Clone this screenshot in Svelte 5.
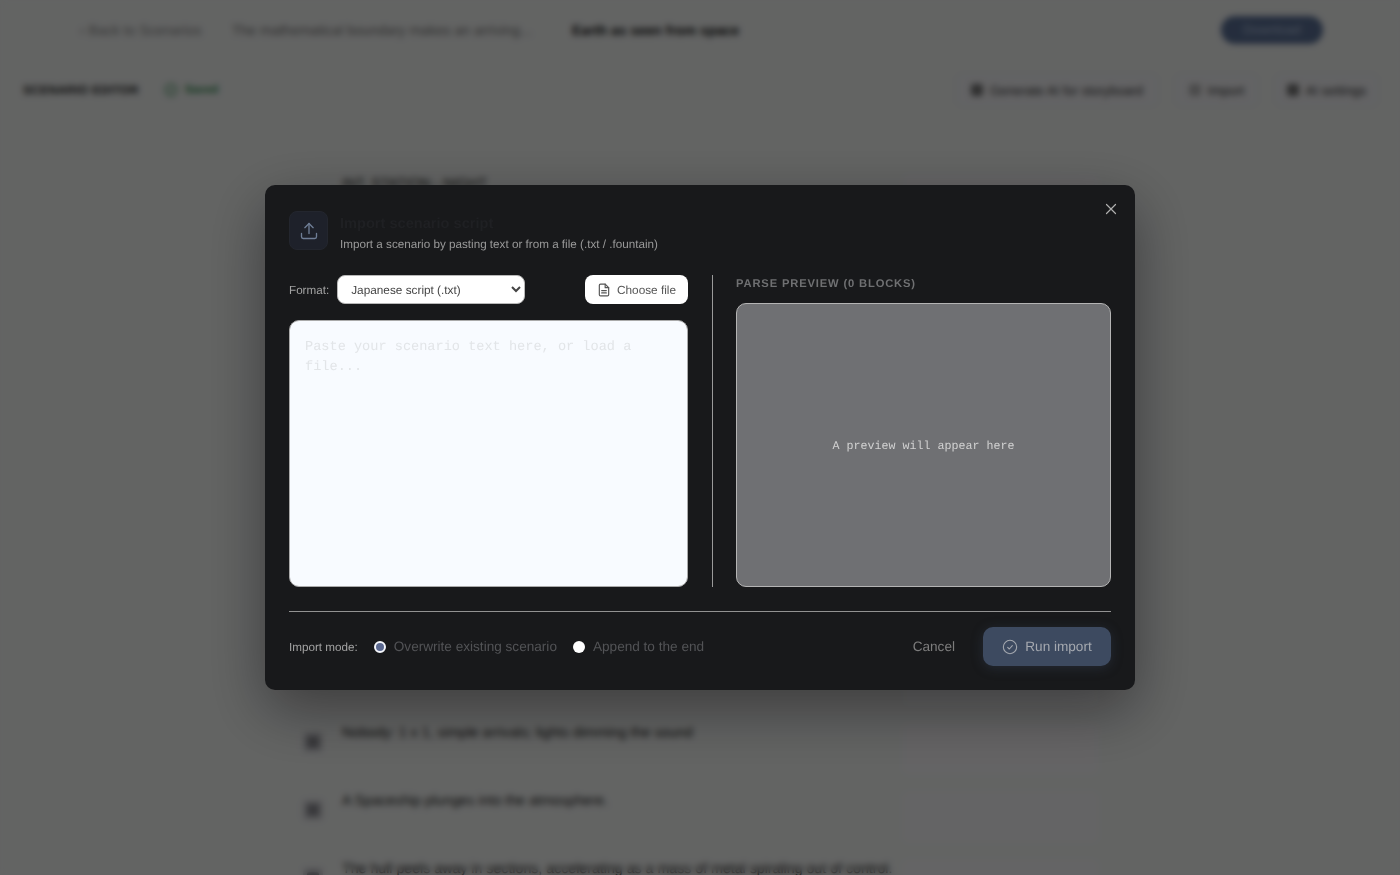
<script>
  const rows = [
    { text: 'INT. STATION - NIGHT', tall: true, icon: false },
    { text: 'A long silence settles over the crew.', icon: true },
    { text: 'Alarms echo along the empty hall.', icon: true },
    { text: 'The commander studies the display.', icon: true },
    { text: 'Static crackles through the speakers.', icon: true },
    { text: 'A warning light begins to flash.', icon: true },
    { text: 'The hatch slides slowly open.', icon: true },
    { text: 'Nobody moves for a long moment.', icon: true },
    { text: 'Nobody: 1 x 1, simple arrivals; lights dimming the sound', icon: true },
    { text: 'A Spaceship plunges into the atmosphere.', icon: true },
    { text: 'The hull peels away in sections, accelerating as a mass of metal spiraling out of control.', icon: true }
  ];
  let mode = $state('overwrite');
  let format = $state('ja');
</script>

<div class="page">
  <header class="top">
    <span class="back">‹ Back to Scenarios</span>
    <span class="crumb">The mathematical boundary makes an arriving...</span>
    <strong class="scene">Earth as seen from space</strong>
    <span class="publish">Download</span>
  </header>
  <div class="tools">
    <div class="tools-left">
      <b>SCENARIO EDITOR</b>
      <span class="saved">
        <svg width="14" height="14" viewBox="0 0 24 24" fill="none" stroke="currentColor" stroke-width="2"><circle cx="12" cy="12" r="10"/><path d="m8 12 3 3 5-6"/></svg>
        Saved
      </span>
    </div>
    <div class="tools-right">
      <span class="tool t1"><i class="glyph"></i>Generate AI for storyboard</span>
      <span class="tool t2"><i class="glyph faint"></i>Import</span>
      <span class="tool t3"><i class="glyph"></i>AI settings</span>
    </div>
  </div>
  <main class="list">
    {#each rows as r}
      <div class="row" class:tall={r.tall}>
        <i class="badge" class:hidden={!r.icon}></i>
        <p>{r.text}</p>
        <span class="meta"></span>
      </div>
    {/each}
  </main>
</div>

<div class="overlay">
  <section class="modal">
    <button class="close" aria-label="Close">
      <svg width="14" height="14" viewBox="0 0 14 14" fill="none" stroke="currentColor" stroke-width="1.2" stroke-linecap="round"><path d="M2.5 2.5l9 9M11.5 2.5l-9 9"/></svg>
    </button>
    <div class="head">
      <div class="upload">
        <svg width="20" height="20" viewBox="0 0 24 24" fill="none" stroke="currentColor" stroke-width="1.6" stroke-linecap="round" stroke-linejoin="round"><path d="M3 15v4a2 2 0 0 0 2 2h14a2 2 0 0 0 2-2v-4"/><path d="M12 15V3"/><path d="m7 8 5-5 5 5"/></svg>
      </div>
      <div class="titles">
        <h2>Import scenario script</h2>
        <p>Import a scenario by pasting text or from a file (.txt / .fountain)</p>
      </div>
    </div>

    <div class="body">
      <div class="left">
        <div class="controls">
          <label class="fmt" for="fmt">Format:</label>
          <select id="fmt" bind:value={format}>
            <option value="ja">Japanese script (.txt)</option>
            <option value="fo">Fountain (.fountain)</option>
          </select>
          <button class="file">
            <svg width="14" height="14" viewBox="0 0 24 24" fill="none" stroke="currentColor" stroke-width="2" stroke-linecap="round" stroke-linejoin="round"><path d="M14 2H6a2 2 0 0 0-2 2v16a2 2 0 0 0 2 2h12a2 2 0 0 0 2-2V8z"/><path d="M14 2v6h6"/><path d="M8 13h8M8 17h8"/></svg>
            Choose file
          </button>
        </div>
        <textarea placeholder="Paste your scenario text here, or load a file..."></textarea>
      </div>
      <div class="vline"></div>
      <div class="right">
        <h3>PARSE PREVIEW (0 BLOCKS)</h3>
        <div class="preview">A preview will appear here</div>
      </div>
    </div>

    <div class="foot">
      <span class="mode">Import mode:</span>
      <label class="radio"><input type="radio" name="m" value="overwrite" bind:group={mode} />Overwrite existing scenario</label>
      <label class="radio"><input type="radio" name="m" value="append" bind:group={mode} />Append to the end</label>
      <button class="cancel">Cancel</button>
      <button class="run">
        <svg width="16" height="16" viewBox="0 0 24 24" fill="none" stroke="currentColor" stroke-width="1.6" stroke-linecap="round" stroke-linejoin="round"><circle cx="12" cy="12" r="10"/><path d="m8.5 12.5 2.5 2.5 4.5-5"/></svg>
        Run import
      </button>
    </div>
  </section>
</div>

<style>
  :global(body) {
    margin: 0;
    background: #fff;
    font-family: "Liberation Sans", Arial, sans-serif;
    text-rendering: geometricPrecision;
  }
  select, button, textarea { text-rendering: geometricPrecision; }
  .page {
    height: 875px;
    overflow: hidden;
    background: #f7f9f8;
    color: #111;
  }
  .top {
    height: 60px;
    display: flex;
    align-items: center;
    padding: 0 77px 0 80px;
    font-size: 14px;
    color: #888;
  }
  .back { width: 152px; white-space: nowrap; }
  .crumb { width: 340px; color: #777; white-space: nowrap; }
  .scene { color: #111; font-size: 13.8px; white-space: nowrap; }
  .publish {
    margin-left: auto;
    width: 102px;
    height: 28px;
    line-height: 28px;
    border-radius: 14px;
    background: #5c7299;
    color: #b9c8e0;
    text-align: center;
    font-size: 13px;
  }
  .tools {
    height: 60px;
    display: flex;
    align-items: center;
    justify-content: space-between;
    padding: 0 22px 0 23px;
  }
  .tools-left { display: flex; align-items: center; gap: 25px; }
  .tools-left b { font-size: 12.1px; letter-spacing: .2px; color: #222; white-space: nowrap; }
  .saved { display: flex; align-items: center; gap: 7px; font-size: 11.4px; color: #2c8a4a; font-weight: 600; }
  .tools-right { display: flex; gap: 17px; }
  .tool {
    display: flex;
    align-items: center;
    justify-content: center;
    gap: 7px;
    box-sizing: border-box;
    height: 32px;
    border: 1px solid #eef0f4;
    border-radius: 6px;
    background: #f7f7fa;
    font-size: 13px;
    color: #333;
    white-space: nowrap;
  }
  .t1 { width: 202px; }
  .t2 { width: 83px; }
  .t3 { width: 103px; }
  .glyph { width: 12px; height: 12px; border-radius: 2px; background: #777; }
  .glyph.faint { background: #bbb; }
  .list { width: 820px; margin: 0 auto; padding-top: 55px; }
  .row {
    height: 68px;
    display: flex;
    align-items: flex-start;
    padding-left: 13px;
    box-sizing: border-box;
  }
  .row.tall { height: 73px; margin-top: 0; }
  .badge {
    flex: none;
    position: relative;
    width: 20px;
    height: 20px;
    margin: 8px 19px 0 0;
    border-radius: 4px;
    background: #d4d4d9;
  }
  .badge::after {
    content: "";
    position: absolute;
    inset: 4px;
    border-radius: 2px;
    background: #8c8c92;
  }
  .badge.hidden { visibility: hidden; }
  .row p {
    margin: 0;
    width: 552px;
    flex: none;
    font-size: 14.2px;
    line-height: 18px;
    color: #222;
    white-space: nowrap;
  }
  .meta {
    margin: 0 0 0 9px;
    width: 195px;
    height: 50px;
    border-radius: 6px;
    background: #fbfafd;
  }

  .overlay {
    position: fixed;
    inset: 0;
    display: flex;
    align-items: center;
    justify-content: center;
    background: rgba(0, 0, 0, .6);
    backdrop-filter: blur(3px);
  }
  .modal {
    position: relative;
    box-sizing: border-box;
    width: 870px;
    height: 505px;
    padding: 26px 24px 24px;
    background: #18191b;
    border-radius: 10px;
    box-shadow: 0 20px 60px rgba(0, 0, 0, .4);
    display: flex;
    flex-direction: column;
  }
  .close {
    position: absolute;
    top: 17px;
    right: 17px;
    width: 14px;
    height: 14px;
    padding: 0;
    display: flex;
    border: 0;
    background: none;
    color: #b0b0b0;
  }
  .head { display: flex; gap: 12px; height: 40px; }
  .upload {
    width: 39px;
    height: 39px;
    box-sizing: border-box;
    display: flex;
    align-items: center;
    justify-content: center;
    border-radius: 8px;
    background: #1e212a;
    border: 1px solid #23262e;
    color: #6f7e96;
  }
  .titles h2 {
    margin: 4px 0 0;
    font-size: 14.6px;
    line-height: 18px;
    font-weight: 600;
    color: #1f2023;
  }
  .titles p {
    margin: 4px 0 0;
    font-size: 11.68px;
    line-height: 15px;
    color: #9a9a9a;
    white-space: nowrap;
  }
  .body {
    margin-top: 24px;
    flex: none;
    height: 312px;
    display: grid;
    grid-template-columns: 399px 0 1fr;
    gap: 24px;
  }
  .left { display: flex; flex-direction: column; gap: 16px; }
  .controls { display: flex; align-items: center; height: 29px; }
  .fmt { font-size: 11.68px; color: #a3a3a3; margin-right: 8px; padding-top: 1px; }
  select {
    box-sizing: border-box;
    width: 188px;
    height: 29px;
    padding: 0 9px;
    border: 1px solid #b8b8b8;
    border-radius: 8px;
    background-color: #fff;
    color: #444;
    font: 11.8px "Liberation Sans", Arial, sans-serif;
  }
  .file {
    margin-left: auto;
    box-sizing: border-box;
    width: 103px;
    height: 29px;
    display: flex;
    align-items: center;
    gap: 6px;
    padding: 0 0 0 12px;
    border: 0;
    border-radius: 8px;
    background: #fff;
    color: #555;
    font: 11.8px "Liberation Sans", Arial, sans-serif;
  }
  textarea {
    flex: 1;
    box-sizing: border-box;
    width: 100%;
    padding: 17px 15px 15px;
    border: 1px solid #aaa;
    border-radius: 10px;
    background: #f8fbff;
    resize: none;
    outline: none;
    font: 13.6px/20px "Liberation Mono", monospace;
    color: #333;
  }
  textarea::placeholder { color: #e2e5e8; opacity: 1; }
  .vline { width: 1px; background: #9a9a9a; }
  .right { display: flex; flex-direction: column; min-width: 0; }
  .right h3 {
    box-sizing: border-box;
    margin: 0;
    height: 28px;
    padding-top: 1px;
    font-size: 11.2px;
    line-height: 16px;
    font-weight: 700;
    letter-spacing: .85px;
    color: #6f7072;
    white-space: nowrap;
  }
  .preview {
    flex: 1;
    box-sizing: border-box;
    display: flex;
    align-items: center;
    justify-content: center;
    padding-top: 1px;
    border: 1px solid #b4b4b4;
    border-radius: 10px;
    background: #6f7073;
    color: #d2d2d2;
    font: 11.67px "Liberation Mono", monospace;
  }
  .foot {
    margin-top: 24px;
    border-top: 1px solid #929292;
    padding-top: 15px;
    display: flex;
    align-items: center;
    height: 39px;
  }
  .mode { font-size: 11.68px; color: #a3a3a3; margin-right: 16px; padding-top: 1px; white-space: nowrap; }
  .radio {
    display: flex;
    align-items: center;
    gap: 8px;
    margin-right: 16px;
    font-size: 13.6px;
    color: #525356;
    white-space: nowrap;
  }
  input[type="radio"] {
    appearance: none;
    margin: 0;
    width: 12px;
    height: 12px;
    border-radius: 50%;
    background: #fff;
  }
  input[type="radio"]:checked {
    background: #5a6890;
    border: 2px solid #f4f6fb;
    box-sizing: border-box;
  }
  .cancel {
    margin-left: auto;
    padding: 0;
    border: 0;
    background: none;
    color: #7d7d7d;
    font: 13.6px "Liberation Sans", Arial, sans-serif;
  }
  .run {
    margin-left: 28px;
    width: 128px;
    height: 39px;
    display: flex;
    align-items: center;
    justify-content: center;
    gap: 7px;
    border: 0;
    border-radius: 10px;
    background: #3d4a60;
    box-shadow: 0 2px 12px rgba(61, 74, 96, .35);
    color: #a4a8af;
    font: 13.6px "Liberation Sans", Arial, sans-serif;
  }
</style>
